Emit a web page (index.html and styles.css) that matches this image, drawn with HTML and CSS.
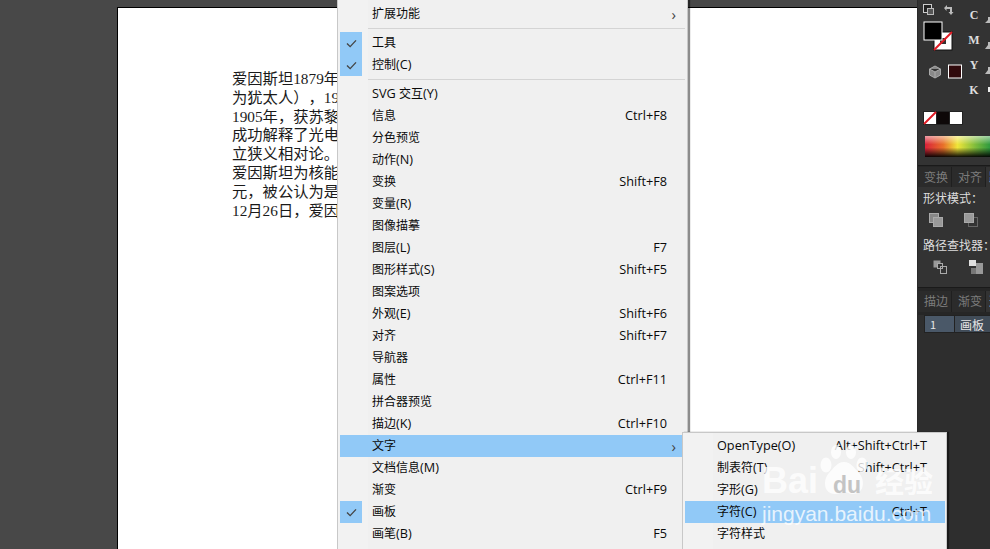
FILE: index.html
```html
<!DOCTYPE html>
<html lang="zh">
<head>
<meta charset="utf-8">
<title>Illustrator 窗口菜单</title>
<link rel="stylesheet" href="styles.css">
</head>
<body>
<main class="workspace">
  <section class="canvas">
    <div class="artboard">
      <p class="doc-line">爱因斯坦<span class="latin">1879</span>年出生于德国</p>
      <p class="doc-line">为犹太人），<span class="latin">1900</span>年毕业</p>
      <p class="doc-line"><span class="latin">1905</span>年，获苏黎世大学</p>
      <p class="doc-line">成功解释了光电效应</p>
      <p class="doc-line">立狭义相对论。</p>
      <p class="doc-line">爱因斯坦为核能开发</p>
      <p class="doc-line">元，被公认为是继伽</p>
      <p class="doc-line"><span class="latin">12</span>月<span class="latin">26</span>日，爱因斯坦</p>
    </div>
  </section>

  <aside class="panel">
    <svg class="color-tools" width="72" height="165" viewBox="918 0 72 165" aria-hidden="true">
      <defs>
        <linearGradient id="hue" x1="0" x2="1" y1="0" y2="0">
          <stop offset="0" stop-color="#d9213a"/>
          <stop offset=".28" stop-color="#e8702a"/>
          <stop offset=".5" stop-color="#efe53a"/>
          <stop offset=".78" stop-color="#7cbb3c"/>
          <stop offset="1" stop-color="#2f9a3f"/>
        </linearGradient>
        <linearGradient id="fade" x1="0" x2="0" y1="0" y2="1">
          <stop offset="0" stop-color="#fff" stop-opacity=".55"/>
          <stop offset=".4" stop-color="#fff" stop-opacity="0"/>
          <stop offset=".55" stop-color="#000" stop-opacity="0"/>
          <stop offset="1" stop-color="#000" stop-opacity=".95"/>
        </linearGradient>
      </defs>
      <rect x="923.500" y="4.500" width="8" height="8" fill="#222" stroke="#ccc"/>
      <rect x="927.500" y="8.500" width="6" height="6" fill="#555" stroke="#bbb"/>
      <path d="M944 8l3-3v2h5v5h1.500l-2.500 3-2.500-3h1.500V9h-3.500v2z" fill="#bbb"/>
      <rect x="934" y="32" width="18" height="18" fill="#fff" stroke="#111"/>
      <rect x="940" y="38" width="6" height="6" fill="#333"/>
      <path d="M934 50l18-18" stroke="#e01b24" stroke-width="2"/>
      <rect x="924" y="22" width="18" height="18" fill="#000" stroke="#fff"/>
      <path d="M935 66l5.500 3v6l-5.500 3-5.500-3v-6z M929.500 69l5.500 3 5.500-3 M935 72v6" fill="#888" stroke="#aaa"/>
      <rect x="948.500" y="65" width="13" height="13" fill="#300a0c" stroke="#fff"/>
      <rect x="923" y="111" width="40" height="14" fill="#222"/>
      <rect x="924" y="112" width="12" height="12" fill="#fff"/>
      <path d="M924 124l12-12" stroke="#e01b24" stroke-width="2"/>
      <rect x="937" y="112" width="12" height="12" fill="#0d0808"/>
      <rect x="950" y="112" width="12" height="12" fill="#fff"/>
      <rect x="925" y="136" width="65" height="21" fill="url(#hue)"/>
      <rect x="925" y="136" width="65" height="21" fill="url(#fade)"/>
      <path d="M985 23l3-3v-3h2v6z M985 49l3-4v-3h2v7z M985 74l3-4v-3h2v7z" fill="#bbb"/>
      <rect x="988" y="87" width="2" height="5" fill="#eee"/>
      <g class="cmyk-labels">
        <text x="974" y="19">C</text>
        <text x="974" y="44">M</text>
        <text x="974" y="69">Y</text>
        <text x="974" y="94">K</text>
      </g>
    </svg>

    <div class="tab-row">
      <span class="tab">变换</span>
      <span class="tab">对齐</span>
      <span class="tab tab-active">路</span>
    </div>
    <div class="pathfinder">
      <div class="panel-label">形状模式：</div>
      <div class="icon-row">
        <svg width="14" height="14" viewBox="0 0 14 14" aria-hidden="true"><rect x="0.500" y="0.500" width="9" height="9" fill="#888" stroke="#aaa"/><rect x="4.500" y="4.500" width="9" height="9" fill="#999" stroke="#aaa"/></svg>
        <svg width="14" height="14" viewBox="0 0 14 14" aria-hidden="true"><rect x="4.500" y="4.500" width="9" height="9" fill="#333" stroke="#666"/><rect x="0.500" y="0.500" width="9" height="9" fill="#999" stroke="#aaa"/></svg>
      </div>
      <div class="panel-label">路径查找器：</div>
      <div class="icon-row icon-row-finder">
        <svg width="14" height="14" viewBox="0 0 14 14" aria-hidden="true"><rect x="0.500" y="0.500" width="7" height="7" fill="#999"/><rect x="4.500" y="3.500" width="5" height="5" fill="#333" stroke="#aaa"/><rect x="7.500" y="6.500" width="6" height="7" fill="none" stroke="#aaa"/></svg>
        <svg width="14" height="14" viewBox="0 0 14 14" aria-hidden="true"><rect x="0" y="0" width="7" height="6" fill="#e0e0e0"/><rect x="7" y="3" width="7" height="11" fill="#999"/><rect x="2" y="8" width="5" height="6" fill="#777"/></svg>
      </div>
    </div>
    <div class="tab-row tab-row-lower">
      <span class="tab">描边</span>
      <span class="tab">渐变</span>
      <span class="tab tab-active">透</span>
    </div>
    <div class="artboards">
      <div class="board-row">
        <span class="board-index">1</span>
        <span class="board-name">画板</span>
      </div>
    </div>
  </aside>

  <nav class="menu menu-main">
    <div class="item"><span class="check"></span><span class="label">扩展功能</span><span class="arrow">›</span></div>
    <div class="sep"></div>
    <div class="item"><span class="check on"><svg viewBox="0 0 12 10" width="11" height="9"><path d="M1 5l3.500 3.500L11 1.500" class="tick"/></svg></span><span class="label">工具</span><span class="arrow"></span></div>
    <div class="item"><span class="check on"><svg viewBox="0 0 12 10" width="11" height="9"><path d="M1 5l3.500 3.500L11 1.500" class="tick"/></svg></span><span class="label">控制<span class="ltn">(C)</span></span><span class="arrow"></span></div>
    <div class="sep"></div>
    <div class="item"><span class="check"></span><span class="label"><span class="ltn">SVG </span>交互<span class="ltn">(Y)</span></span><span class="arrow"></span></div>
    <div class="item"><span class="check"></span><span class="label">信息</span><span class="key">Ctrl+F8</span><span class="arrow"></span></div>
    <div class="item"><span class="check"></span><span class="label">分色预览</span><span class="arrow"></span></div>
    <div class="item"><span class="check"></span><span class="label">动作<span class="ltn">(N)</span></span><span class="arrow"></span></div>
    <div class="item"><span class="check"></span><span class="label">变换</span><span class="key">Shift+F8</span><span class="arrow"></span></div>
    <div class="item"><span class="check"></span><span class="label">变量<span class="ltn">(R)</span></span><span class="arrow"></span></div>
    <div class="item"><span class="check"></span><span class="label">图像描摹</span><span class="arrow"></span></div>
    <div class="item"><span class="check"></span><span class="label">图层<span class="ltn">(L)</span></span><span class="key">F7</span><span class="arrow"></span></div>
    <div class="item"><span class="check"></span><span class="label">图形样式<span class="ltn">(S)</span></span><span class="key">Shift+F5</span><span class="arrow"></span></div>
    <div class="item"><span class="check"></span><span class="label">图案选项</span><span class="arrow"></span></div>
    <div class="item"><span class="check"></span><span class="label">外观<span class="ltn">(E)</span></span><span class="key">Shift+F6</span><span class="arrow"></span></div>
    <div class="item"><span class="check"></span><span class="label">对齐</span><span class="key">Shift+F7</span><span class="arrow"></span></div>
    <div class="item"><span class="check"></span><span class="label">导航器</span><span class="arrow"></span></div>
    <div class="item"><span class="check"></span><span class="label">属性</span><span class="key">Ctrl+F11</span><span class="arrow"></span></div>
    <div class="item"><span class="check"></span><span class="label">拼合器预览</span><span class="arrow"></span></div>
    <div class="item"><span class="check"></span><span class="label">描边<span class="ltn">(K)</span></span><span class="key">Ctrl+F10</span><span class="arrow"></span></div>
    <div class="item item-hot"><span class="check"></span><span class="label">文字</span><span class="arrow">›</span></div>
    <div class="item"><span class="check"></span><span class="label">文档信息<span class="ltn">(M)</span></span><span class="arrow"></span></div>
    <div class="item"><span class="check"></span><span class="label">渐变</span><span class="key">Ctrl+F9</span><span class="arrow"></span></div>
    <div class="item"><span class="check on"><svg viewBox="0 0 12 10" width="11" height="9"><path d="M1 5l3.500 3.500L11 1.500" class="tick"/></svg></span><span class="label">画板</span><span class="arrow"></span></div>
    <div class="item"><span class="check"></span><span class="label">画笔<span class="ltn">(B)</span></span><span class="key">F5</span><span class="arrow"></span></div>
  </nav>

  <nav class="menu menu-sub">
    <div class="item"><span class="check"></span><span class="label"><span class="ltn">OpenType(O)</span></span><span class="key">Alt+Shift+Ctrl+T</span><span class="arrow"></span></div>
    <div class="item"><span class="check"></span><span class="label">制表符<span class="ltn">(T)</span></span><span class="key">Shift+Ctrl+T</span><span class="arrow"></span></div>
    <div class="item"><span class="check"></span><span class="label">字形<span class="ltn">(G)</span></span><span class="arrow"></span></div>
    <div class="item item-hot"><span class="check"></span><span class="label">字符<span class="ltn">(C)</span></span><span class="key">Ctrl+T</span><span class="arrow"></span></div>
    <div class="item"><span class="check"></span><span class="label">字符样式</span><span class="arrow"></span></div>
  </nav>

  <div class="watermark">
    <svg class="paw" width="48" height="50" viewBox="0 0 48 50" aria-hidden="true">
      <ellipse cx="6" cy="20" rx="5.500" ry="7.500"/>
      <ellipse cx="16" cy="7" rx="5" ry="7"/>
      <ellipse cx="31" cy="7" rx="5" ry="7"/>
      <ellipse cx="42" cy="20" rx="5.500" ry="7.500"/>
      <path d="M24 17c-7 0-10 6-15 11-6 6-6 21 6 21 4 0 6-2 9-2s5 2 9 2c12 0 12-15 6-21-5-5-8-11-15-11z"/>
    </svg>
    <div class="wm-brand"><span class="wm-bai">Bai</span><span class="wm-du">du</span><span class="wm-cn">经验</span></div>
    <div class="wm-url">jingyan.baidu.com</div>
  </div>
</main>
</body>
</html>
```
FILE: styles.css
```css
* { box-sizing: border-box; }
html, body { margin: 0; padding: 0; height: 100%; }
body { overflow: hidden; font-family: "Open Sans", "Noto Sans CJK SC", sans-serif; }

.workspace {
  position: relative;
  display: flex;
  width: 990px;
  height: 549px;
  overflow: hidden;
  background: #484848;
}

.canvas {
  flex: 1;
  padding: 7px 0 0 117px;
  border-right: 1px solid #2a2a2a;
}
.artboard {
  height: 560px;
  padding: 60px 0 0 114px;
  background: #fff;
  border: 1px solid #000;
  border-right: 0;
  font-family: "Noto Sans CJK SC", sans-serif;
  font-size: 15.3px;
  color: #1a1a1a;
  text-spacing-trim: space-all;
}
.doc-line { margin: 0; height: 18.8px; line-height: 18.8px; white-space: nowrap; }
.latin { font-family: "Liberation Serif", serif; }

.panel {
  width: 72px;
  flex: none;
  display: flex;
  flex-direction: column;
  background: #333;
  color: #ddd;
  overflow: hidden;
  font-family: "Noto Sans CJK SC", sans-serif;
}
.color-tools { display: block; flex: none; }
.cmyk-labels text {
  font-family: "Liberation Serif", serif;
  font-size: 12px;
  font-weight: 700;
  fill: #ddd;
  text-anchor: middle;
}

.tab-row {
  display: flex;
  flex: none;
  height: 22px;
  padding-top: 1px;
  background: #262626;
  border-top: 1px solid #1a1a1a;
  font-size: 12px;
  white-space: nowrap;
}
.tab {
  flex: none;
  padding: 0 3px 0 6px;
  line-height: 20px;
  height: 21px;
  color: #7c7c7c;
  background: #2b2b2b;
  border-right: 1px solid #1f1f1f;
}
.tab-active { background: #333; color: #ddd; padding: 0 0 0 3px; border-right: 0; }

.pathfinder { height: 100px; padding: 3px 0 0 5px; flex: none; background: #333; }
.panel-label { font-size: 12px; line-height: 16px; color: #ddd; white-space: nowrap; }
.icon-row { display: flex; gap: 21px; padding: 7px 0 0 6px; height: 31px; }
.icon-row-finder { gap: 22px; padding-left: 10px; }

.tab-row-lower { height: 28px; padding-top: 3px; }
.artboards { flex: 1; padding: 0 0 0 6px; background: #2e2e2e; }
.board-row { display: flex; height: 18px; background: #3a3a3a; border: 1px solid #222; border-right: 0; font-size: 12px; line-height: 17px; color: #e6e6e6; }
.board-index { width: 30px; flex: none; padding-left: 5px; background: #4a5868; border-right: 1px solid #222; font-size: 11px; }
.board-name { padding-left: 5px; background: #414c58; flex: 1; }

.menu {
  position: absolute;
  background: linear-gradient(to right, #f2f2f2 30px, #f0f0f0 30px);
  border: 1px solid #c8c8c8;
  font-size: 12px;
  color: #0a0a0a;
  box-shadow: 2px 0 1px rgba(0, 0, 0, .45);
}
.menu-main { left: 337px; top: -2px; width: 351px; padding: 4px 1px 0 2px; height: 560px; }
.menu-sub { left: 682px; top: 432px; width: 265px; padding: 2px 1px 0 2px; height: 120px; }

.item { display: flex; align-items: center; height: 22px; white-space: nowrap; line-height: 22px; }
.item-hot { background: #91c9f7; }
.check { flex: none; width: 22px; height: 22px; margin-right: 10px; display: flex; align-items: center; justify-content: center; }
.check.on { background: #91c9f7; }
.tick { fill: none; stroke: #444; stroke-width: 1.500; }
.label { flex: 1; }
.ltn { font-size: 12.700px; line-height: 1; }
.key { flex: none; font-size: 12.700px; padding-bottom: 2px; }
.arrow { flex: none; width: 19px; font-size: 15px; line-height: 20px; text-align: right; padding-right: 10px; color: #444; }
.menu-sub .arrow { width: 18px; }
.sep { height: 7px; margin: 0 1px 0 28px; padding-top: 3px; }
.sep::before { content: ""; display: block; height: 1px; background: #d4d4d4; }

.watermark {
  position: absolute;
  left: 762px;
  top: 448px;
  width: 185px;
  pointer-events: none;
  color: rgba(255, 255, 255, .8);
  font-family: "Liberation Sans", sans-serif;
}
.paw { position: absolute; left: 58px; top: -3px; fill: rgba(255, 255, 255, .8); }
.wm-brand { position: relative; display: flex; align-items: baseline; height: 52px; padding-top: 14px; font-weight: 700; line-height: 36px; white-space: nowrap; }
.wm-bai { font-size: 36px; width: 66px; }
.wm-du { font-size: 23px; width: 47px; padding-left: 5px; color: #c4c4c4; }
.wm-cn { font-size: 29px; font-family: "Noto Sans CJK SC", sans-serif; }
.wm-url { font-size: 21px; line-height: 28px; white-space: nowrap; }
```
